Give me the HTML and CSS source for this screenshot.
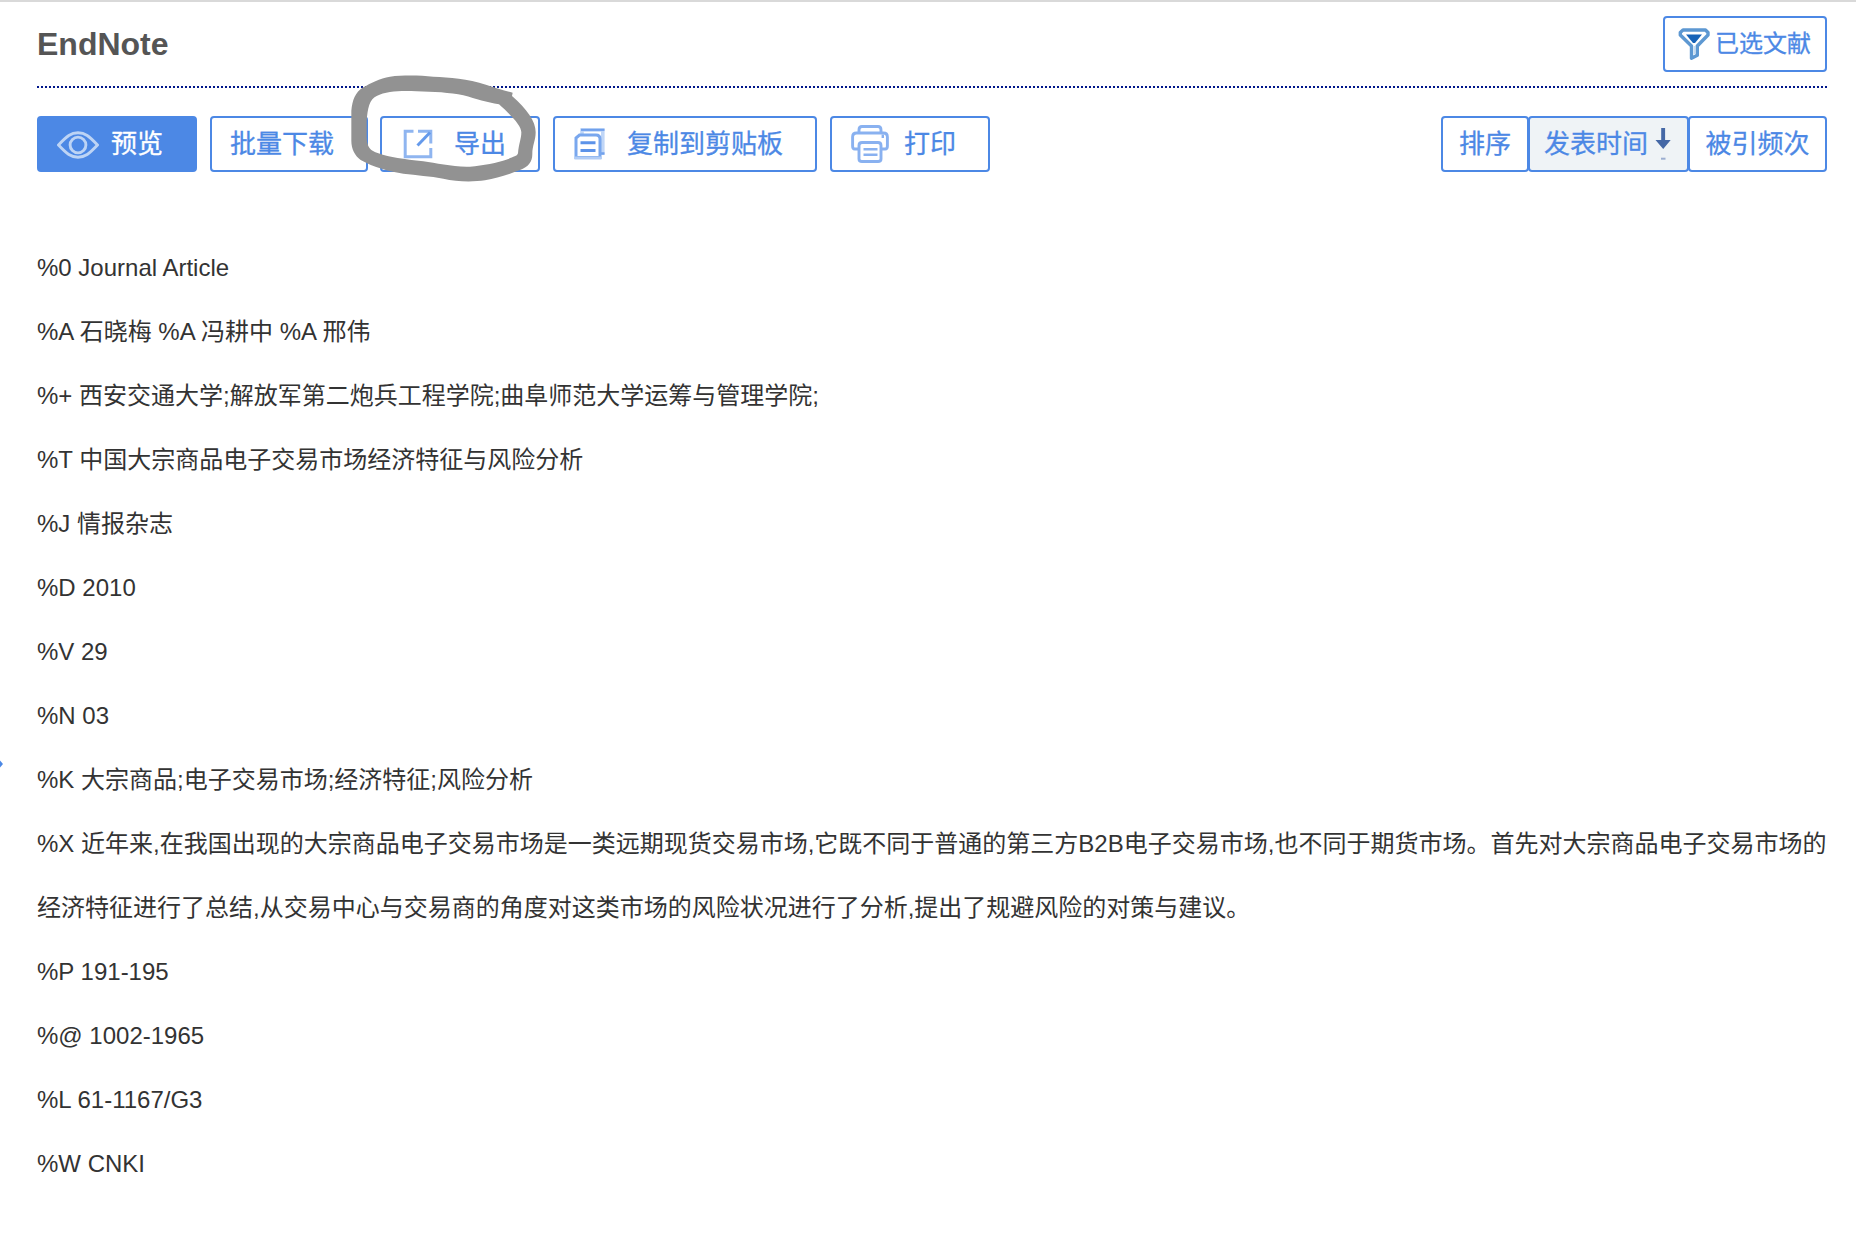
FILE: index.html
```html
<!DOCTYPE html>
<html lang="zh-CN">
<head>
<meta charset="utf-8">
<title>EndNote</title>
<link rel="stylesheet" href="styles.css">
</head>
<body>
<div class="page">
  <header class="header">
    <h1 class="title">EndNote</h1>
    <button class="btn selected-docs">
      <svg class="icon-funnel" width="32" height="32" viewBox="0 0 32 32" fill="none">
        <path d="M5 2h22.500l2.500 2.500v2.500L19.300 18v9.300l-5.800 3V18L2.300 7V4.500z" stroke="#5d98d2" stroke-width="3.400" stroke-linejoin="round"/>
        <path d="M8 6.500h16l-7 8.500h-2z" fill="#1763b8"/>
        <path d="M16.400 18v8" stroke="#c4dcf2" stroke-width="1.500"/>
      </svg>
      <span>已选文献</span>
    </button>
  </header>
  <div class="rule"></div>

  <nav class="toolbar">
    <div class="actions">
      <button class="btn btn-primary">
        <svg class="icon-eye" width="42" height="28" viewBox="0 0 42 28" fill="none" stroke="#bdd4f5">
          <path d="M1.500 14C10 5 14 1.800 21 1.800S32 5 40.500 14C32 23 28 26.200 21 26.200S10 23 1.500 14z" stroke-width="2.900"/>
          <circle cx="21" cy="14" r="7.900" stroke-width="2.900"/>
        </svg>
        <span>预览</span>
      </button>
      <button class="btn btn-batch"><span>批量下载</span></button>
      <button class="btn btn-export">
        <svg class="icon-export" width="30" height="30" viewBox="0 0 30 30" fill="none">
          <path d="M10.500 2.200H2.200v25.600h25.600V19" stroke="#8fb5f0" stroke-width="3"/>
          <path d="M15 2.200h12.800V14.500" stroke="#8fb5f0" stroke-width="3"/>
          <path d="M14.500 16.500L27 3.500" stroke="#659aeb" stroke-width="3"/>
        </svg>
        <span>导出</span>
      </button>
      <button class="btn btn-copy">
        <svg class="icon-copy" width="32" height="32" viewBox="0 0 32 32" fill="none">
          <path d="M8 6V2H28.800V25H26" stroke="#c0d6f7" stroke-width="3.600"/>
          <path d="M7 1.800H30.500" stroke="#70a0ec" stroke-width="2.200"/>
          <path d="M27 25.500h3.500" stroke="#70a0ec" stroke-width="2.500"/>
          <path d="M5.500 7H22q4 0 4 4V29.500H2V10z" fill="#fff" stroke="#79a7ee" stroke-width="3"/>
          <path d="M.5 30h27" stroke="#b1ccf5" stroke-width="3"/>
          <path d="M6.500 14.800h15M6.500 22.500h15" stroke="#5c93e9" stroke-width="3"/>
        </svg>
        <span>复制到剪贴板</span>
      </button>
      <button class="btn btn-print">
        <svg class="icon-print" width="38" height="38" viewBox="0 0 38 38" fill="none" stroke="#89b1f0" stroke-width="2.900">
          <path d="M8 8V5q0-3.500 3-3.500h16q3 0 3 3.500v3"/>
          <path d="M8 24H3.700Q1.600 24 1.600 21V12q0-4 4-4h26.800q4 0 4 4v9q0 3-2.200 3H30"/>
          <path d="M8 20.500q0-3 3-3h16q3 0 3 3V34q0 2.500-3 2.500H11Q8 36.500 8 34z"/>
          <path d="M12.500 24.300h14M12.500 29.700h14M31.800 9.500v3.500" stroke-width="2.400"/>
        </svg>
        <span>打印</span>
      </button>
    </div>
    <div class="sorting">
      <button class="btn sort-label">排序</button>
      <button class="btn sort-time">
        <span>发表时间</span>
        <svg width="16" height="34" viewBox="0 0 16 34">
          <path d="M6.200 1h3.900v12H15.700L8.200 22 .5 13h5.700z" fill="#4568a6"/>
          <path d="M6 31.700h4.500" stroke="#9caed1" stroke-width="2"/>
        </svg>
      </button>
      <button class="btn sort-cited">被引频次</button>
    </div>
  </nav>

  <main class="record">
    <p>%0 Journal Article</p>
    <p>%A 石晓梅 %A 冯耕中 %A 邢伟</p>
    <p>%+ 西安交通大学;解放军第二炮兵工程学院;曲阜师范大学运筹与管理学院;</p>
    <p>%T 中国大宗商品电子交易市场经济特征与风险分析</p>
    <p>%J 情报杂志</p>
    <p>%D 2010</p>
    <p>%V 29</p>
    <p>%N 03</p>
    <p>%K 大宗商品;电子交易市场;经济特征;风险分析</p>
    <p>%X 近年来,在我国出现的大宗商品电子交易市场是一类远期现货交易市场,它既不同于普通的第三方B2B电子交易市场,也不同于期货市场。首先对大宗商品电子交易市场的<br>经济特征进行了总结,从交易中心与交易商的角度对这类市场的风险状况进行了分析,提出了规避风险的对策与建议。</p>
    <p>%P 191-195</p>
    <p>%@ 1002-1965</p>
    <p>%L 61-1167/G3</p>
    <p>%W CNKI</p>
  </main>

  <svg class="marker" width="186" height="108" viewBox="0 0 558 324">
    <path fill-rule="evenodd" fill="#929292" d="M488 56C450 48 430 38 410 33C350 13 300 10 250 8C210 4 160 3 120 8C90 13 60 28 40 40C15 55 7 80 4 110L4 200C4 225 15 245 32 258C70 280 120 293 160 299C200 304 240 306 280 314C320 324 370 324 405 319C440 312 470 304 510 288C535 278 547 265 547 240C547 215 557 200 557 175C557 140 530 105 486 66ZM447 91C485 125 514 155 514 175C514 195 506 210 504 238C501 248 490 247 475 255C440 268 400 274 360 278C310 280 260 267 220 262C160 255 120 251 85 238C60 230 51 220 50 190L50 140C53 105 58 75 80 66C110 50 160 50 200 52C250 53 300 56 340 64C380 75 410 85 447 91Z"/>
  </svg>
  <svg class="edge-handle" width="3" height="8" viewBox="0 0 3 8"><path d="M0 0.500L3 4L0 7.500z" fill="#4c88e5"/></svg>
</div>
</body>
</html>
```
FILE: styles.css
```css
* {
  box-sizing: border-box;
}

body {
  margin: 0;
  background: #fff;
  font-family: "Liberation Sans", Arial, "Noto Sans CJK SC", sans-serif;
  color: #333;
}

.page {
  position: relative;
  height: 1236px;
  padding: 14px 29px 0 37px;
  border-top: 2px solid #d9d9d9;
  overflow: hidden;
}

.header {
  display: flex;
  justify-content: space-between;
  height: 70px;
}

.title {
  margin: 8px 0 0;
  font-size: 32px;
  line-height: 40px;
  color: #555;
}

.btn {
  display: flex;
  align-items: center;
  height: 56px;
  padding: 0;
  border: 2px solid #4c88e5;
  border-radius: 4px;
  background: #fff;
  color: #4c88e5;
  font-family: inherit;
  font-size: 26px;
  line-height: 52px;
  white-space: nowrap;
  -webkit-text-stroke: 0.3px currentColor;
}

.btn svg {
  flex: none;
}

.selected-docs {
  width: 164px;
  padding-left: 13px;
  gap: 5px;
  font-size: 24px;
}

.rule {
  height: 2px;
  background: repeating-linear-gradient(90deg, #00168a 0 2px, #fff 2px 4px);
}

.toolbar {
  display: flex;
  justify-content: space-between;
  margin-top: 28px;
}

.actions {
  display: flex;
  gap: 13px;
}

.btn-primary {
  width: 160px;
  padding-left: 18px;
  gap: 12px;
  background: #4c88e5;
  color: #fff;
}

.icon-eye {
  margin-top: 2px;
}

.btn-batch {
  width: 158px;
  padding-left: 18px;
  margin-right: -1px;
}

.btn-export {
  width: 160px;
  padding-left: 21px;
  gap: 21px;
}

.btn-copy {
  width: 264px;
  padding-left: 19px;
  gap: 21px;
}

.btn-print {
  width: 160px;
  padding-left: 19px;
  gap: 15px;
}

.sorting {
  display: flex;
}

.sorting .btn {
  justify-content: center;
}

.sort-label {
  width: 88px;
}

.sorting .sort-time {
  width: 161px;
  margin: 0 -1px;
  padding-left: 14px;
  gap: 7px;
  justify-content: flex-start;
  background: #eff3f6;
}

.sort-cited {
  width: 139px;
}

.record {
  margin-top: 64px;
  font-size: 24px;
  line-height: 64px;
  white-space: nowrap;
}

.record p {
  margin: 0;
}

.marker {
  position: absolute;
  left: 350px;
  top: 72px;
}

.edge-handle {
  position: absolute;
  left: 0;
  top: 758px;
}
```
